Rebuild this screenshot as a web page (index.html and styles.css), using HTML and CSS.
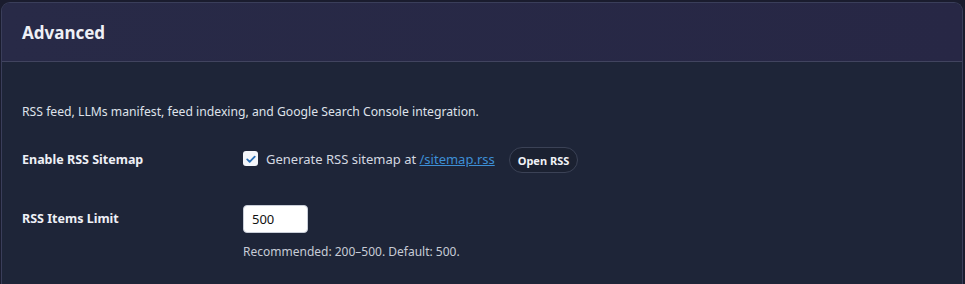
FILE: index.html
```html
<!DOCTYPE html>
<html lang="en">
  <head>
    <meta charset="UTF-8" />
    <meta name="viewport" content="width=device-width, initial-scale=1.0" />
    <title>Advanced</title>
    <link rel="stylesheet" href="styles.css">
  </head>
  <body>
    <div class="card">
      <div class="card__header">
        <h2>Advanced</h2>
      </div>
      <div class="card__body">
        <p class="desc">RSS feed, LLMs manifest, feed indexing, and Google Search Console integration.</p>

        <div class="row">
          <div class="row__label">Enable RSS Sitemap</div>
          <div class="row__field inline">
            <label class="check">
              <span class="check__box">
                <svg viewBox="0 0 16 16" width="12" height="12">
                  <path d="M3 8.5l3.2 3.2L13 4.8" fill="none" stroke="#2a6fb5" stroke-width="2.4" stroke-linecap="round" stroke-linejoin="round"/>
                </svg>
              </span>
              <span>Generate RSS sitemap at <a href="#">/sitemap.rss</a></span>
            </label>
            <button class="pill">Open RSS</button>
          </div>
        </div>

        <div class="row">
          <div class="row__label">RSS Items Limit</div>
          <div class="row__field">
            <input type="text" value="500" class="num" />
            <p class="help">Recommended: 200–500. Default: 500.</p>
          </div>
        </div>
      </div>
    </div>
  </body>
</html>
```

FILE: styles.css
```css
* {
  margin: 0;
  padding: 0;
  box-sizing: border-box;
}
body {
  background: #1a1c2e;
  font-family: "Noto Sans", "Open Sans", sans-serif;
  color: #e4e7ee;
  padding: 2px 2px 0 1px;
  height: 284px;
  overflow: hidden;
}
.card {
  border: 1px solid #3a3e5a;
  border-bottom: none;
  border-radius: 9px 9px 0 0;
  background: #1e2538;
  height: 282px;
  overflow: hidden;
}
.card__header {
  height: 59px;
  background: linear-gradient(90deg, #282a47, #272745);
  border-bottom: 1px solid #41445f;
  display: flex;
  align-items: center;
  padding: 0 20px;
}
.card__header h2 {
  font-size: 17px;
  font-weight: 700;
  color: #eef0f6;
}
.card__body {
  padding: 41px 20px 0;
}
.desc {
  font-size: 12.2px;
  line-height: 17px;
  color: #dfe2ea;
  margin-bottom: 26px;
}
.row {
  display: flex;
  align-items: flex-start;
  margin-bottom: 31px;
}
.row__label {
  width: 221px;
  flex-shrink: 0;
  font-size: 12.5px;
  line-height: 28px;
  font-weight: 700;
  color: #eef0f6;
}
.row__field {
  display: flex;
  flex-direction: column;
}
.row__field.inline {
  flex-direction: row;
  align-items: center;
  height: 28px;
  gap: 14px;
}
.check {
  display: flex;
  align-items: center;
  gap: 8px;
  font-size: 13px;
  color: #d4d8e1;
  margin-top: -3px;
}
.check__box {
  width: 15px;
  height: 15px;
  background: #f4f6fa;
  border-radius: 3px;
  display: flex;
  align-items: center;
  justify-content: center;
}
.check a {
  color: #3d8fd6;
  text-decoration: underline;
}
.pill {
  height: 26px;
  padding: 0 8px;
  border: 1px solid #3b4256;
  border-radius: 13px;
  background: #1b2131;
  color: #f1f3f7;
  font-family: inherit;
  font-size: 11px;
  font-weight: 700;
  cursor: pointer;
}
.num {
  width: 65px;
  height: 28px;
  border: 1px solid #c9ced8;
  border-radius: 4px;
  background: #fff;
  color: #111;
  font-family: inherit;
  font-size: 13px;
  padding: 0 8px;
}
.help {
  font-size: 12px;
  line-height: 17px;
  color: #c7ccd6;
  margin-top: 10px;
}
```
